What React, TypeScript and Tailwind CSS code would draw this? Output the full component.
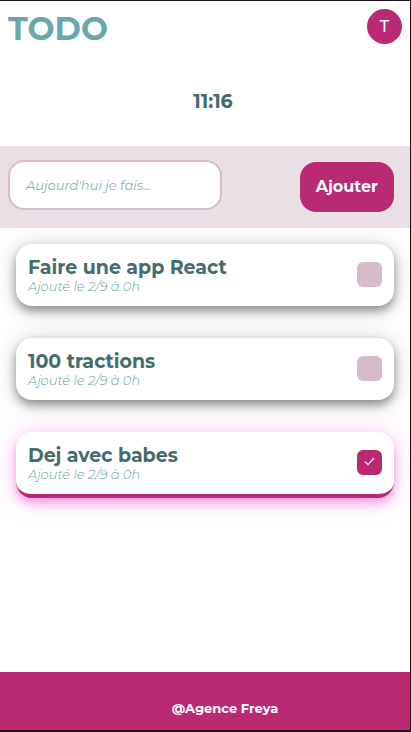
import { useState } from "react";
import type { FormEvent } from "react";

type Task = { id: number; title: string; added: string; done: boolean };

const initialTasks: Task[] = [
  { id: 1, title: "Faire une app React", added: "Ajouté le 2/9 à 0h", done: false },
  { id: 2, title: "100 tractions", added: "Ajouté le 2/9 à 0h", done: false },
  { id: 3, title: "Dej avec babes", added: "Ajouté le 2/9 à 0h", done: true },
];

function TaskCard({ task, onToggle }: { task: Task; onToggle: () => void }) {
  const look = task.done
    ? "border-b-4 border-[#b92a72] shadow-[0_5px_10px_rgba(232,50,200,0.4),0_2px_24px_rgba(232,50,200,0.25)]"
    : "shadow-[0_5px_10px_rgba(0,0,0,0.38),0_2px_24px_rgba(0,0,0,0.18)]";
  return (
    <li>
      <label
        className={`flex items-center justify-between rounded-2xl bg-white px-3 pt-3 pb-3.5 ${look}`}
      >
        <span className="flex flex-col">
          <span className="text-[19px] leading-6 font-bold text-[#446c6c]">{task.title}</span>
          <span className="text-[13px] leading-3 font-light text-[#68a3a6] italic">{task.added}</span>
        </span>
        <span className="grid">
          <input
            type="checkbox"
            checked={task.done}
            onChange={onToggle}
            className="col-start-1 row-start-1 size-[25px] appearance-none rounded-md bg-[#d6bbcb] checked:bg-[#b92a72]"
          />
          {task.done && (
            <svg
              viewBox="0 0 25 25"
              aria-hidden="true"
              className="pointer-events-none col-start-1 row-start-1 size-[25px]"
              fill="none"
              stroke="#fbeaf3"
              strokeWidth="1.3"
            >
              <path d="M8 11.6 L11 14.6 L17 8" />
            </svg>
          )}
        </span>
      </label>
    </li>
  );
}

export default function App() {
  const [tasks, setTasks] = useState(initialTasks);
  const [draft, setDraft] = useState("");

  function addTask(event: FormEvent) {
    event.preventDefault();
    if (!draft.trim()) return;
    setTasks([...tasks, { id: Date.now(), title: draft, added: "Ajouté le 2/9 à 0h", done: false }]);
    setDraft("");
  }

  function toggle(id: number) {
    setTasks(tasks.map((t) => (t.id === id ? { ...t, done: !t.done } : t)));
  }

  return (
    <div className="flex min-h-screen flex-col border-t border-r border-b-2 border-[#17131a] bg-white font-[Montserrat,Inter,sans-serif]">
      <header className="px-2 pt-2">
        <div className="flex items-start justify-between">
          <h1 className="text-[32px] leading-10 font-bold text-[#68a8ab]">TODO</h1>
          <button
            type="button"
            className="size-[35px] rounded-full bg-[#b92a72] text-[16px] font-medium text-white"
          >
            T
          </button>
        </div>
        <p className="pt-10 pb-8 pl-4 text-center text-[19px] leading-[25px] font-bold text-[#446c6c]">11:16</p>
      </header>

      <form
        onSubmit={addTask}
        className="flex items-end justify-between bg-[#eadfe5] pt-3.5 pr-4 pb-4 pl-2"
      >
        <input
          type="text"
          aria-label="Nouvelle tâche"
          placeholder="Aujourd'hui je fais..."
          value={draft}
          onChange={(e) => setDraft(e.target.value)}
          className="mb-0.5 h-[50px] w-[214px] rounded-2xl border-2 border-[#d6bbcb] bg-white px-4 text-[13px] text-[#446c6c] outline-none placeholder:text-[#84b3b5] placeholder:italic"
        />
        <button
          type="submit"
          className="h-[50px] rounded-2xl bg-[#b92a72] px-4 text-[16px] font-bold text-white"
        >
          Ajouter
        </button>
      </form>

      <main className="grow px-4 pt-4">
        <ul className="flex flex-col gap-8">
          {tasks.map((task) => (
            <TaskCard key={task.id} task={task} onToggle={() => toggle(task.id)} />
          ))}
        </ul>
      </main>

      <footer className="bg-[#b92a72] pt-[26px] pb-3 pl-10 text-center text-[13px] leading-5 font-bold text-white">
        @Agence Freya
      </footer>
    </div>
  );
}
